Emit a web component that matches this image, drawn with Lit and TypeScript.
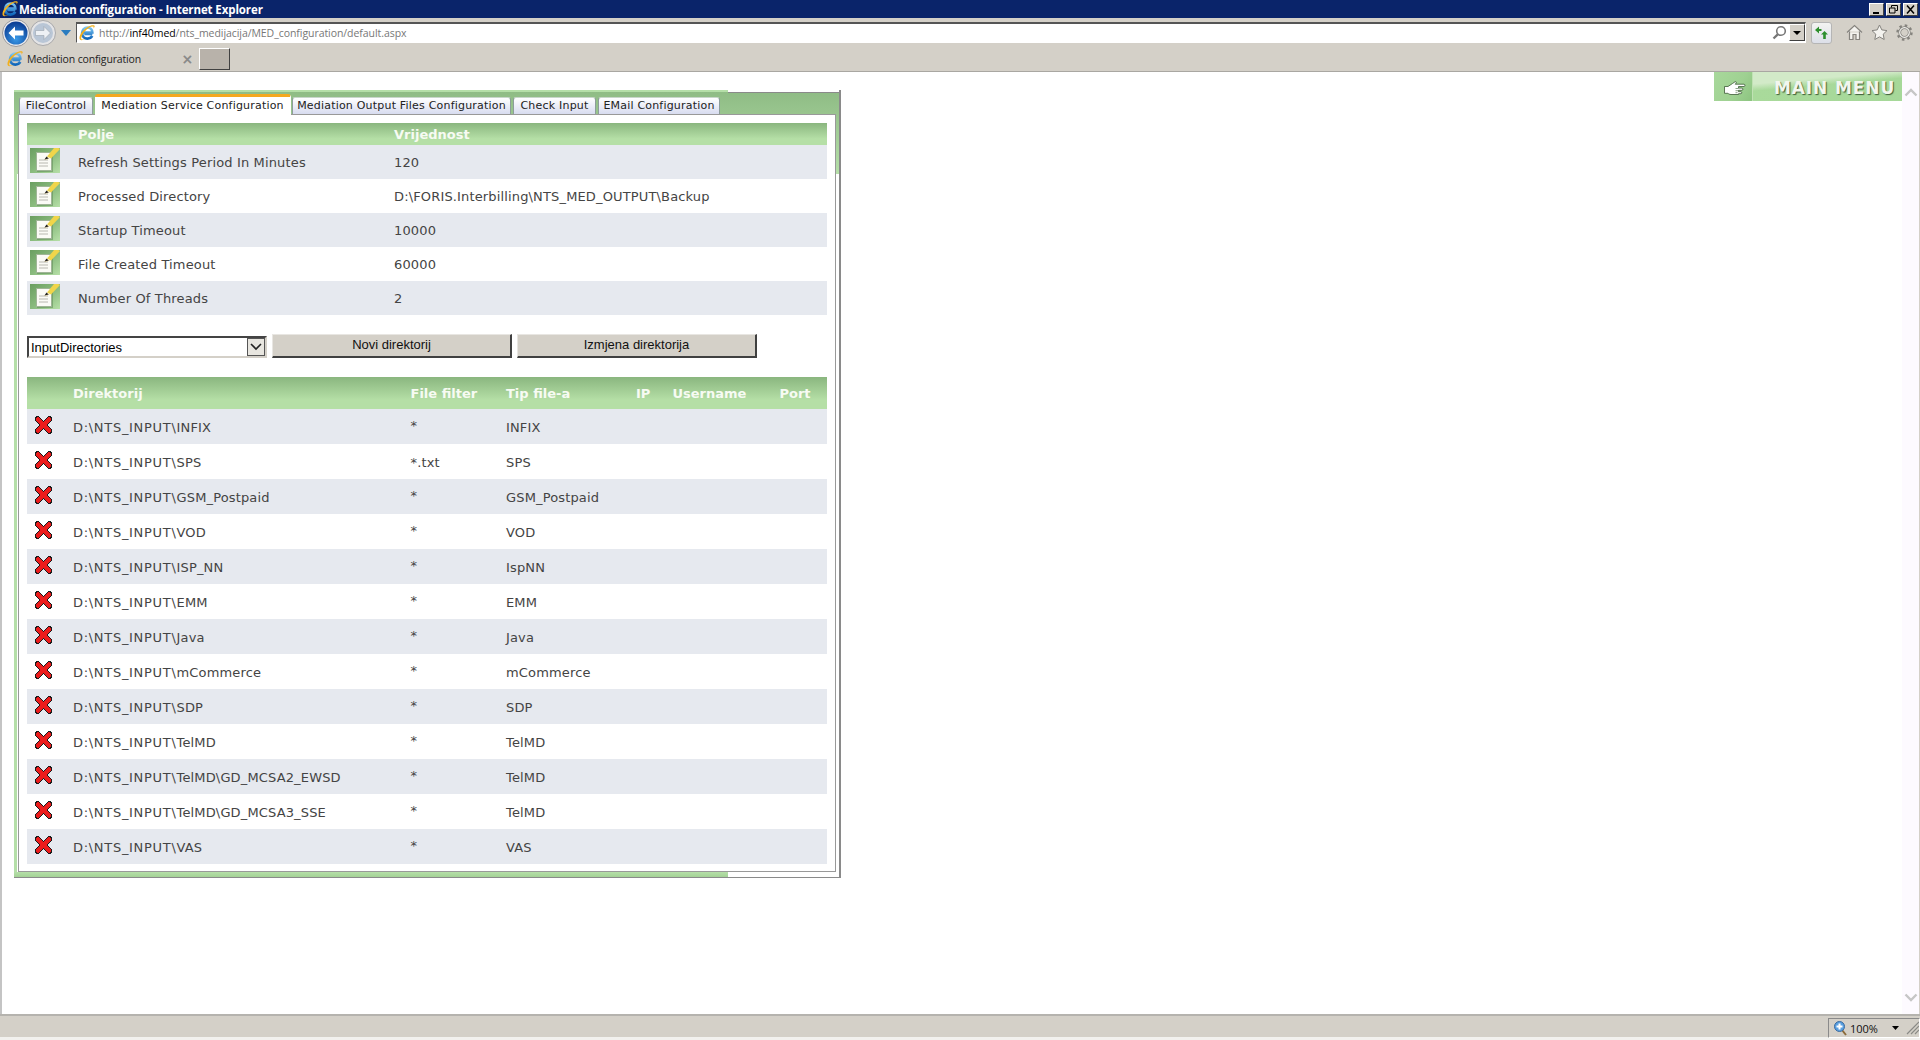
import { LitElement, html, css } from "lit";
import { customElement } from "lit/decorators.js";

const ieLogo = (size: number) => html`<svg class="ie" width=${size} height=${size} viewBox="0 0 18 18">
  <defs><linearGradient id="ieb" x1="0" y1="0" x2="0" y2="1"><stop offset="0" stop-color="#7cc6f2"/><stop offset="1" stop-color="#0f66bb"/></linearGradient></defs>
  <path d="M15 10H6M4.400 8.400h10.600c0-3.300-2.400-5.600-5.500-5.600-3.400 0-6 2.800-6 6.300s2.600 6.200 6 6.200c2.400 0 4.300-1.100 5.400-3" fill="none" stroke="url(#ieb)" stroke-width="3"/>
  <path d="M17.500 .8C15-.8 8 2 3.300 8 .7 11.400-.2 15.200 1.200 16.600c1.200 1.100 3.800.5 6.300-1.300-2.100 1-4.100 1.300-4.700.6-1-1.200.4-4.800 3.400-8.400C9.800 3.300 13.800 1 16 1.800c.4.200.6.700.3 2.200.9-1.400 1.700-2.500 1.200-3.200z" fill="#f2b01e"/>
</svg>`;

const editIcon = html`<svg class="edit" width="30" height="25" viewBox="0 0 30 25">
  <defs><linearGradient id="egr" x1="0" y1="0" x2="1" y2="1"><stop offset="0" stop-color="#6a9e60"/><stop offset=".55" stop-color="#8cbd80"/><stop offset="1" stop-color="#b7e0a8"/></linearGradient></defs>
  <rect width="30" height="25" fill="url(#egr)"/>
  <rect x="7" y="5" width="16" height="19" fill="#5f8a58" opacity=".55"/>
  <rect x="6.500" y="4.500" width="15" height="18" fill="#fbfbf6" stroke="#9fb596"/>
  <path d="M9 12h9M9 15h9M9 18h9" stroke="#b8b8b0" stroke-width="1"/>
  <path d="M17 8.500l7-8.500h4.500l1.500 1-9 9.500z" fill="#f0d54a"/>
  <path d="M17 8.500l2.600 1.900-2.600 1.100-2.800.5z" fill="#e8d7a8"/>
  <path d="M14.500 11.500l2-3 2.100 2z" fill="#222"/>
</svg>`;

const xIcon = html`<svg class="x" width="17" height="18" viewBox="0 0 17 18" shape-rendering="crispEdges">
  <path d="M2.500 3l12 12M14.500 3l-12 12" stroke="#1a1a1a" stroke-width="5.500" stroke-linecap="round"/>
  <path d="M2.800 3.300l11.400 11.400M14.200 3.300L2.800 14.700" stroke="#ec1c1c" stroke-width="3.800" stroke-linecap="round"/>
</svg>`;

const settings = [
  ["Refresh Settings Period In Minutes", "120"],
  ["Processed Directory", "D:\\FORIS.Interbilling\\NTS_MED_OUTPUT\\Backup"],
  ["Startup Timeout", "10000"],
  ["File Created Timeout", "60000"],
  ["Number Of Threads", "2"],
];

const ROOT = "D:\\NTS_INPUT\\";
const dirs = [
  ["INFIX", "*", "INFIX"],
  ["SPS", "*.txt", "SPS"],
  ["GSM_Postpaid", "*", "GSM_Postpaid"],
  ["VOD", "*", "VOD"],
  ["ISP_NN", "*", "IspNN"],
  ["EMM", "*", "EMM"],
  ["Java", "*", "Java"],
  ["mCommerce", "*", "mCommerce"],
  ["SDP", "*", "SDP"],
  ["TelMD", "*", "TelMD"],
  ["TelMD\\GD_MCSA2_EWSD", "*", "TelMD"],
  ["TelMD\\GD_MCSA3_SSE", "*", "TelMD"],
  ["VAS", "*", "VAS"],
];

const tabs = [
  ["FileControl", 74],
  ["Mediation Service Configuration", 196],
  ["Mediation Output Files Configuration", 219],
  ["Check Input", 83],
  ["EMail Configuration", 122],
] as const;

@customElement("app-root")
export class AppRoot extends LitElement {
  static styles = css`
    :host { display: flex; flex-direction: column; width: 1920px; height: 1040px; overflow: hidden; background: #d4d0c8; font-family: "DejaVu Sans", sans-serif; }
    svg { display: block; flex: none; }

    .title { height: 18px; flex: none; background: #0a246a; display: flex; align-items: center; color: #fff; font: bold 11.500px "Open Sans", sans-serif; letter-spacing: -.1px; padding-right: 2px; box-sizing: border-box; }
    .title .ie { margin: 0 0 0 2px; }
    .title span { flex: 1; margin-left: 1px; }
    .wb { width: 15px; height: 13px; box-sizing: border-box; background: #d4d0c8; border: 1px solid; border-color: #fff #404040 #404040 #fff; margin-left: 2px; }
    .wb svg { margin: 1px 0 0 1px; }

    .toolbar { height: 29px; flex: none; display: flex; align-items: center; position: relative; }
    .nav { display: flex; align-items: center; width: 76px; flex: none; padding-left: 2px; box-sizing: border-box; }
    .url { width: 1730px; height: 21px; flex: none; box-sizing: border-box; background: #fff; border: 1px solid; border-color: #555 #fff #fff #555; border-top-width: 2px; display: flex; align-items: center; font: 10.500px "Open Sans", sans-serif; color: #777; padding-left: 2px; margin-top: -1px; }
    .url .ie { margin-right: 4px; }
    .url b { font-weight: 400; color: #000; }
    .url .path { flex: 1; letter-spacing: -.06px; }
    .drop { width: 16px; height: 17px; box-sizing: border-box; background: #d4d0c8; border: 1px solid; border-color: #fff #404040 #404040 #fff; display: flex; align-items: center; justify-content: center; }
    .refresh { width: 21px; height: 22px; box-sizing: border-box; margin-left: 5px; border: 1px solid #b5b5b5; border-radius: 3px; background: linear-gradient(#f3f3f1, #dcdfe8); display: flex; align-items: center; justify-content: center; }
    .tools { display: flex; gap: 8px; margin-left: 14px; }

    .tabrow { height: 25px; flex: none; display: flex; align-items: flex-start; box-sizing: border-box; border-bottom: 1px solid #a9a7a2; padding-top: 1px; }
    .tab { width: 196px; height: 22px; flex: none; box-sizing: border-box; display: flex; align-items: center; padding-left: 7px; font: 10.500px "Open Sans", sans-serif; letter-spacing: -.15px; color: #222; }
    .tab .ie { margin-right: 4px; }
    .tab span { flex: 1; }
    .tab i { font: bold 14px "DejaVu Sans", sans-serif; color: #8a8a8a; margin-right: 3px; font-style: normal; }
    .newtab { width: 31px; height: 22px; margin-left: 3px; box-sizing: border-box; background: #b8b2aa; border: 1px solid; border-color: #fff #404040 #404040 #fff; }

    .view { flex: 1; min-height: 0; display: flex; background: #fff; border-left: 2px solid #c4c4c4; }
    .page { flex: 1; min-width: 0; display: flex; align-items: flex-start; }
    .scroll { width: 18px; flex: none; box-sizing: border-box; background: #fdfaff; display: flex; flex-direction: column; justify-content: space-between; padding: 16px 0 12px 2px; border-right: 1px solid #d4d0c8; }

    .menu { margin-left: auto; width: 188px; height: 29px; flex: none; display: flex; align-items: center; box-sizing: border-box;
      background:
        linear-gradient(175deg, #d2eac8 0, #d2eac8 12px, transparent 19px) 39px 0 / 149px 100% no-repeat,
        linear-gradient(120deg, #a8d89b 0, #9fd192 60%, #8cc480 100%) 0 0 / 38px 100% no-repeat,
        linear-gradient(90deg, #c0e2b4 0, #c0e2b4 1px, #a9da9b 1px, #a6d899 100%) 38px 0 / 150px 100% no-repeat; }
    .menu .hand { margin-left: 10px; margin-top: 3px; }
    .menu span { margin-left: 28px; padding-top: 2px; font: bold 17px "DejaVu Sans", sans-serif; letter-spacing: .9px; color: #f2f6ee; text-shadow: 1px 1px 1px #3f5f39; white-space: nowrap; }

    .panel { margin: 18px 0 0 12px; width: 827px; height: 788px; flex: none; box-sizing: border-box; display: flex; flex-direction: column; padding: 0 3px 5px 4px; border-right: 2px solid #8a8a8a; border-bottom: 1px solid #8a8a8a;
      background:
        linear-gradient(#b5dfa8, #b5dfa8) left top / 714px 2px no-repeat,
        linear-gradient(#8a8a8a, #8a8a8a) right 2px / 111px 1px no-repeat,
        linear-gradient(#b5dfa8, #a4d296) left bottom / 714px 5px no-repeat,
        linear-gradient(#8fbc85, #b5dfa8) left 2px / 100% 82px no-repeat,
        linear-gradient(#b5dfa8, #b5dfa8) left top / 3px 100% no-repeat; }
    .tabs { height: 24px; flex: none; display: flex; align-items: flex-end; padding-left: 1px; gap: 2px; position: relative; z-index: 1; }
    .ptab { height: 17px; box-sizing: border-box; flex: none; text-align: center; font: 11px/16px "DejaVu Sans", sans-serif; letter-spacing: .2px; color: #222; background: linear-gradient(#fff, #d8dcf0); border: 1px solid #8d9d9b; border-bottom: 0; border-top-color: #c8d6ca; border-radius: 3px 3px 0 0; white-space: nowrap; }
    .ptab.on { height: 21px; background: #fff; border: 0; border-top: 3px solid #f4a81f; border-right: 1px solid #fff; margin-bottom: -1px; margin-right: -1px; line-height: 18px; border-radius: 3px 3px 0 0; color: #222; }
    .content { flex: 1; min-height: 0; background: #fff; border: 1px solid #999; padding: 8px; display: flex; flex-direction: column; width: 818px; box-sizing: border-box; }

    .head { background: linear-gradient(#8ab67f 0, #b5dfa6 72%, #b5dfa6 100%); color: #f7fbf3; font: bold 13px "DejaVu Sans", sans-serif; align-items: center; }
    .row { display: grid; align-items: center; color: #444; font: 13px "DejaVu Sans", sans-serif; letter-spacing: .15px; white-space: pre; }
    .row.alt { background: #e6e9ef; }

    .t1 .head, .t1 .row { display: grid; grid-template-columns: 51px 316px 1fr; }
    .t1 .head { height: 22px; }
    .t1 .row { height: 34px; }
    .t1 .edit { margin: -3px 0 0 3px; }

    .ctl { display: flex; height: 24px; margin-top: 19px; gap: 5px; flex: none; }
    .select { width: 240px; height: 22px; margin-top: 2px; box-sizing: border-box; display: flex; align-items: center; border: 2px solid; border-color: #444 #d4d0c8 #d4d0c8 #444; background: #fff; font: 13px "Liberation Sans", sans-serif; color: #000; padding-left: 2px; }
    .select span { flex: 1; }
    .select div { width: 18px; height: 18px; box-sizing: border-box; background: #e8e6e0; border: 1px solid #555; display: flex; align-items: center; justify-content: center; }
    .btn { width: 240px; flex: none; box-sizing: border-box; background: #d4d0c8; border: 0; border-right: 2px solid #404040; border-bottom: 2px solid #404040; border-top: 1px solid #e8e6e2; border-left: 1px solid #e8e6e2; font: 13px "Liberation Sans", sans-serif; color: #111; text-align: center; line-height: 18px; padding: 0 0 2px; }

    .t2 { margin-top: 19px; }
    .t2 .head, .t2 .row { display: grid; grid-template-columns: 46px 337.500px 95.500px 130px 36.500px 107px 1fr; }
    .t2 .head { height: 32px; }
    .t2 .row { height: 35px; padding-top: 2px; box-sizing: border-box; }
    .t2 .x { margin: -5px 0 0 8px; }
    .pre { letter-spacing: .7px; }
    .star { margin-top: -4px; }

    .status { height: 26px; flex: none; box-sizing: border-box; border-top: 2px solid #b5b3ae; display: flex; justify-content: flex-end; position: relative; border-bottom: 3px solid #f2f1ee; }
    .zoom { width: 92px; height: 20px; margin-top: 2px; box-sizing: border-box; border: 1px solid; border-color: #8a8a8a #fff #fff #8a8a8a; display: flex; align-items: center; font: 11px "Open Sans", sans-serif; color: #111; padding-left: 5px; }
    .zoom span { margin-left: 3px; }
    .zoom svg.a { margin-left: 14px; }
    .zoom svg.g { margin-left: auto; }
  `;

  render() {
    return html`
      <div class="title">
        ${ieLogo(16)}<span>Mediation configuration - Internet Explorer</span>
        <div class="wb"><svg width="11" height="9" viewBox="0 0 11 9"><path d="M2 8h6" stroke="#000" stroke-width="2"/></svg></div>
        <div class="wb"><svg width="11" height="9" viewBox="0 0 11 9"><path d="M3.500 2.500V.5h6v5h-2M1.500 3h5.500v5h-5.500z" fill="none" stroke="#000"/></svg></div>
        <div class="wb"><svg width="11" height="9" viewBox="0 0 11 9"><path d="M2 .5l7 8M9 .5l-7 8" stroke="#000" stroke-width="1.500"/></svg></div>
      </div>

      <div class="toolbar">
        <div class="nav">
          <svg width="28" height="28" viewBox="0 0 28 28"><defs><radialGradient id="bk" cy=".75" r=".7"><stop offset="0" stop-color="#3a9ae8"/><stop offset="1" stop-color="#0b3f96"/></radialGradient></defs>
            <circle cx="14" cy="14" r="13.500" fill="#e8e8ec" stroke="#9a9a9c"/><circle cx="14" cy="14" r="11.500" fill="url(#bk)"/>
            <path d="M6.500 14l6.500-6.500v4h8.500v5H13V20.500z" fill="#fff"/></svg>
          <svg style="margin-left:0" width="26" height="26" viewBox="0 0 26 26"><circle cx="13" cy="13" r="12.500" fill="#e4e4e6" stroke="#a8a8aa"/><circle cx="13" cy="13" r="10" fill="#b9c6d6"/>
            <path d="M20.500 13l-6.500-6.500v4H5.500v5H14V19.500z" fill="#eef1f5" stroke="#9aa2ac" stroke-width=".6"/></svg>
          <svg style="margin-left:5px" width="10" height="6" viewBox="0 0 10 6"><path d="M0 0h10L5 6z" fill="#2a7cc0"/></svg>
        </div>
        <div class="url">
          ${ieLogo(16)}
          <span class="path">http://<b>inf40med</b>/nts_medijacija/MED_configuration/default.aspx</span>
          <svg width="15" height="15" viewBox="0 0 15 15" style="margin-right:2px"><circle cx="9" cy="6" r="4.300" fill="none" stroke="#777" stroke-width="1.600"/><path d="M6 9.200L1.500 13.500" stroke="#777" stroke-width="2.400"/></svg>
          <div class="drop"><svg width="8" height="4" viewBox="0 0 8 4"><path d="M0 0h8L4 4z" fill="#000"/></svg></div>
        </div>
        <div class="refresh"><svg width="15" height="14" viewBox="0 0 15 14"><path d="M1 4l4-3.500V3h2.500v2H5v2.500zM14 8.500l-3.500-3.500L7 8.500h2.200V13h2.600V8.500z" fill="#2d8f2d"/></svg></div>
        <div class="tools">
          <svg width="17" height="17" viewBox="0 0 17 17"><path d="M1 8.500L8.500 1.500 16 8.500M3.500 7.500V15.500h3.500v-5h3v5h3.500V7.500" fill="#f4f3ef" stroke="#85837e" stroke-width="1.200"/></svg>
          <svg width="17" height="17" viewBox="0 0 17 17"><path d="M8.500 1l2.300 4.900 5.200.7-3.800 3.600 1 5.300-4.700-2.600-4.700 2.600 1-5.300L1 6.600l5.200-.7z" fill="#f4f3ef" stroke="#85837e"/></svg>
          <svg width="17" height="17" viewBox="0 0 17 17"><circle cx="8.500" cy="8.500" r="4.800" fill="none" stroke="#85837e" stroke-width="2.800"/><circle cx="8.500" cy="8.500" r="4.800" fill="none" stroke="#f2f1ed" stroke-width="1.200"/><circle cx="8.500" cy="8.500" r="7" fill="none" stroke="#85837e" stroke-width="2.400" stroke-dasharray="2.500 3"/></svg>
        </div>
      </div>

      <div class="tabrow">
        <div class="tab">${ieLogo(16)}<span>Mediation configuration</span><i>×</i></div>
        <div class="newtab"></div>
      </div>

      <div class="view">
        <div class="page">
          <div class="panel">
            <div class="tabs">
              ${tabs.map(([t, w], i) => html`<div class="ptab ${i === 1 ? "on" : ""}" style="width:${w}px">${t}</div>`)}
            </div>
            <div class="content">
              <div class="t1">
                <div class="head"><span></span><span>Polje</span><span>Vrijednost</span></div>
                ${settings.map(([a, b], i) => html`<div class="row ${i % 2 === 0 ? "alt" : ""}">${editIcon}<span>${a}</span><span>${b}</span></div>`)}
              </div>
              <div class="ctl">
                <div class="select"><span>InputDirectories</span><div><svg width="12" height="8" viewBox="0 0 12 8"><path d="M1 1l5 5 5-5" fill="none" stroke="#222" stroke-width="1.600"/></svg></div></div>
                <button class="btn">Novi direktorij</button>
                <button class="btn">Izmjena direktorija</button>
              </div>
              <div class="t2">
                <div class="head"><span></span><span>Direktorij</span><span>File filter</span><span>Tip file-a</span><span>IP</span><span>Username</span><span>Port</span></div>
                ${dirs.map(([a, b, c], i) => html`<div class="row ${i % 2 === 0 ? "alt" : ""}">${xIcon}<span><span class="pre">${ROOT}</span>${a}</span><span class=${b === "*" ? "star" : ""}>${b}</span><span>${c}</span></div>`)}
              </div>
            </div>
          </div>
          <div class="menu">
            <svg class="hand" width="22" height="14" viewBox="0 0 22 14"><path d="M.5 5.500h3.500L8.500 2.500 11 .8c1-.5 1.800.5 1 1.500l-.8.9h8.800c1.300 0 1.300 2.300 0 2.300h-5.500v1.600h3.500c1.200 0 1.200 2.200 0 2.200h-3.500v1.400h2.500c1 0 1 2 0 2h-2.500v.8H7c-1.500 0-2.500-.7-3-1.200H.5z" fill="#fff" stroke="#3d5a37" stroke-width=".8"/><path d="M14.500 7.500h-3M14.500 9.700h-3M13.500 11.700h-2" stroke="#5a7a54" stroke-width=".7"/></svg>
            <span>MAIN MENU</span>
          </div>
        </div>
        <div class="scroll">
          <svg width="14" height="9" viewBox="0 0 14 9"><path d="M1.500 7.500L7 2l5.500 5.500" fill="none" stroke="#c6c6c6" stroke-width="2.400"/></svg>
          <svg width="14" height="9" viewBox="0 0 14 9"><path d="M1.500 1.500L7 7l5.500-5.500" fill="none" stroke="#c6c6c6" stroke-width="2.400"/></svg>
        </div>
      </div>

      <div class="status">
        <div class="zoom">
          <svg width="13" height="15" viewBox="0 0 13 15"><path d="M8 9l4 5" stroke="#8a6a3a" stroke-width="2"/><circle cx="5.500" cy="5.500" r="5" fill="#5aa0e0" stroke="#3a6aa0"/><path d="M5.500 2.500v6M2.500 5.500h6" stroke="#fff" stroke-width="2"/></svg>
          <span>100%</span>
          <svg class="a" width="7" height="4" viewBox="0 0 7 4"><path d="M0 0h7L3.500 4z" fill="#000"/></svg>
          <svg class="g" width="13" height="14" viewBox="0 0 13 14"><path d="M13 1L1 13M13 5L5 13M13 9l-4 4" stroke="#8a8a86" stroke-width="1.200"/></svg>
        </div>
      </div>
    `;
  }
}
